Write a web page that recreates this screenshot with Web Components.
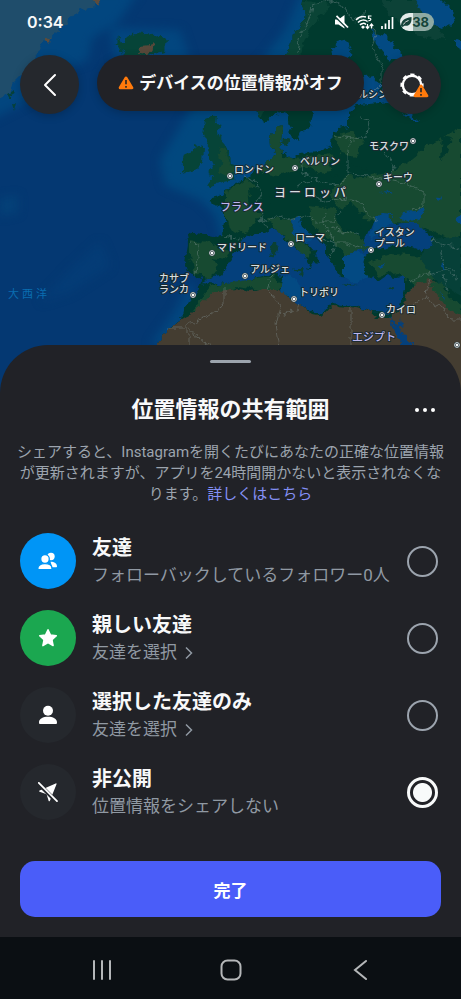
<!DOCTYPE html>
<html lang="ja">
<head>
<meta charset="utf-8">
<meta name="viewport" content="width=device-width, initial-scale=1">
<title>位置情報の共有範囲</title>
<style>
html, body { margin: 0; background: #0b0f13; }
body { font-family: Roboto, "Noto Sans CJK JP", sans-serif; color: #f8f9fa; }
</style>
</head>
<body>
<location-screen>
  <world-map slot="map"></world-map>
  <status-bar slot="top" time="0:34" battery="38"></status-bar>
  <map-header slot="top">デバイスの位置情報がオフ</map-header>
  <bottom-sheet slot="sheet" heading="位置情報の共有範囲">
    <span slot="intro">シェアすると、Instagramを開くたびにあなたの正確な位置情報が更新されますが、アプリを24時間開かないと表示されなくなります。</span>
    <share-option name="友達" color="#0095f6">
      <svg slot="icon" width="20" height="20" viewBox="0 0 20 20" fill="#fff"><circle cx="13" cy="5.500" r="3.700"/><path d="M12.500 10.700c4 0 6.500 2 6.500 4.800 0 .4-.3.700-.7.700h-4z"/><g stroke="#0095f6" stroke-width="1.300"><circle cx="7" cy="8" r="4.300"/><path d="M7 12.600c4 0 7 1.800 7 4.800 0 .8-.4 1.200-1 1.200H1c-.7 0-1.200-.4-1.200-1.200 0-3 3-4.800 6.800-4.800z"/></g></svg>
      フォローバックしているフォロワー0人
    </share-option>
    <share-option name="親しい友達" color="#1ba750" pick>
      <svg slot="icon" width="20" height="20" viewBox="0 0 20 20" fill="#fff" stroke="#fff" stroke-width="1.500" stroke-linejoin="round"><path d="M10 1.800l2.500 5.300 5.800.7-4.300 4 1.100 5.800-5.100-2.900-5.100 2.900L6 11.800l-4.300-4 5.800-.7z"/></svg>
      友達を選択
    </share-option>
    <share-option name="選択した友達のみ" color="#25282d" pick>
      <svg slot="icon" width="20" height="20" viewBox="0 0 20 20" fill="#fff"><circle cx="10" cy="5.700" r="5"/><path d="M10 11.800c5 0 9 2 9 5.600 0 1-.5 1.600-1.300 1.600H2.300C1.500 19 1 18.400 1 17.400c0-3.600 4-5.600 9-5.600z"/></svg>
      友達を選択
    </share-option>
    <share-option name="非公開" color="#25282d" checked>
      <svg slot="icon" width="20" height="20" viewBox="0 0 20 20"><path d="M17.700 1.400c.5-.2 1 .2.800.8l-6.600 16.600c-.3.700-1.100.7-1.300 0l-2-6.600-7-2.400c-.6-.2-.6-1 0-1.200z" fill="#fff"/><path d="M.8 1.900l17.500 17.500" stroke="#25282d" stroke-width="4"/><path d="M.8.900l18.200 18.200" stroke="#fff" stroke-width="1.800" stroke-linecap="round"/></svg>
      位置情報をシェアしない
    </share-option>
    <primary-button slot="action">完了</primary-button>
  </bottom-sheet>
  <system-nav slot="nav"></system-nav>
</location-screen>

<script>
const define = (tag, html, setup) => customElements.define(tag, class extends HTMLElement {
  constructor() {
    super();
    const t = document.createElement('template');
    t.innerHTML = html;
    this.attachShadow({ mode: 'open' }).append(t.content.cloneNode(true));
  }
  connectedCallback() { if (setup) setup(this, this.shadowRoot); }
});

define('location-screen', `
<style>
  :host { display: flex; flex-direction: column; min-height: 100vh; position: relative; isolation: isolate; background: #043872; }
  .map { position: absolute; inset: 0; z-index: -1; overflow: hidden; }
  .top { flex: 1; min-height: 160px; }
</style>
<div class="map"><slot name="map"></slot></div>
<div class="top"><slot name="top"></slot></div>
<slot name="sheet"></slot>
<slot name="nav"></slot>`);

define('world-map', `
<style>
  :host { display: block; }
  svg { display: block; width: 100%; height: auto; }
  filter { color-interpolation-filters: sRGB; }
  text { font-family: "Noto Sans CJK JP", sans-serif; font-weight: 500; font-size: 10px; fill: #d8dfe0; stroke: #1b2b30; stroke-width: 2px; stroke-linejoin: round; paint-order: stroke; }
  .country { fill: #bdb5ee; font-size: 11px; }
  .region { font-size: 12px; letter-spacing: 3px; }
  .sea { fill: #0a6db0; stroke: none; font-size: 11px; font-weight: 400; letter-spacing: 3px; }
</style>
<svg viewBox="0 0 461 420" role="img" aria-label="地図">
  <defs>
    <filter id="rough" x="0" y="0" width="100%" height="100%" filterUnits="userSpaceOnUse">
      <feTurbulence type="fractalNoise" baseFrequency=".13" numOctaves="3" seed="7"/>
      <feDisplacementMap in="SourceGraphic" scale="9" xChannelSelector="R" yChannelSelector="G"/>
    </filter>
    <filter id="soft"><feGaussianBlur stdDeviation="5"/></filter>
    <clipPath id="land"><use href="#continent"/></clipPath>
    <g id="pin"><circle r="3.200" fill="#27363c"/><circle r="2.400" fill="none" stroke="#cfd8da"/><circle r="1.300" fill="#fff"/></g>
  </defs>
  <rect width="461" height="420" fill="#043872"/>
  <g filter="url(#soft)">
    <path d="M-10-10H140L118 22 92 38 88 60 60 70 30 100 0 115-10 120z" fill="#02467f"/>
    <path d="M110 28L180 30 190 60 150 75 115 60z" fill="#02467f"/>
    <path d="M300-5L285 30 262 60 240 80 205 85 190 110 178 130 160 160 165 185 200 200 215 215 222 240 240 240 300 200 470 120V-5z" fill="#01487f"/>
    <path d="M0 198L18 196 18 212 0 216z" fill="#044178"/>
    <path d="M70 270l30-28 10 24-40 26-30 10z" fill="#043c76"/>
    <path d="M190 280L175 310 150 345H170L200 310z" fill="#02467f"/>
  </g>
  <g filter="url(#rough)">
    <path d="M-9-9H98L93 8 74 14 62 28 48 40 38 50 33 62 22 74 12 84 9 94-9 98z" fill="#1f4d6b"/>
    <path d="M90-5h16l-8 12z" fill="#5b4c3d"/><path d="M45 40l5-4-1 8z" fill="#5b4c3d"/>
    <path d="M8 94l6-3-3 8zM12 104l4-2-2 8z" fill="#06413a"/>
    <path d="M117 38l8 4 4-7 6-2 8 1 10 1 8-2 5 8-2 10-10 3-13 4-14-2-8-5 2-5-6-3 6-1z" fill="#064438"/>
    <path d="M138 54l3-8 8-1 6-2-2 8-6 4z" fill="#57483a"/>
    <path id="continent" d="M305-9L302 5 306 12 305 20 300 27 293 37 290 47 287 55 262 90 256 108 260 119 267 121 273 116 285 111 287 118 292 137 297 142 302 130 310 128 312 114 310 105 320 90 335 60 333 47 337 42 350 40 353 50 346 60 347 80 352 92 362 95 378 88 394 94 392 102 357 105 348 113 348 128 333 131 332 146 318 151 300 153 290 157 280 151 282 132 280 125 270 135 271 146 276 155 267 162 257 167 252 173 238 181 233 187 225 192 223 195 210 198 209 202 218 205 225 212 225 220 223 235 213 236 192 232 186 237 188 245 185 263 188 273 195 274 202 280 197 292 185 307 182 320 167 330 158 345V429H470V-9z" fill="#003a2e"/>
    <g clip-path="url(#land)">
      <path d="M300 0L330 5 310 30 300 55 270 90 260 120 250 80z" fill="#0a4436"/>
      <path d="M380 0h45l20 40-30-5-25-20z" fill="#0c4237"/>
      <g fill="#174a31">
        <path d="M268 124h14v32l20 2 30-4 10 16-22 4-14-8-30 10-18-4z"/>
        <path d="M335 135l16-4 12 10-8 16-14-4z"/>
        <path d="M345 175l42-2 20-10 24-20 30-16V245l-30-14-20-8-50-2-20-8-10-20z"/>
        <path d="M225 194l22-16 12 12 6 22-20 22-16-6-4-18z"/>
        <path d="M190 240l20 4 20 6-10 20-14 10-10-8-6-16z"/>
        <path d="M268 218l22 2 10 14 12 18-6 8-20-22-14-12z"/>
        <path d="M310 205l24 4 6 18 20 12 14 4-4 10-24 4-12-14-22-18z"/>
        <path d="M368 262l24-8 36 2 20 6-18 22-12 6-20-18-20 4z"/>
        <path d="M210 286l30-6 34-4 8 10-12 6-32-6-24 10-14 24-6-12z"/>
      </g>
      <g fill="#003a2e">
        <path d="M338 208l14-5 12 12-4 14-16 2-8-10zM248 190l14-2 10 14-10 12-12-8zM330 160l20 4 24 8-8 6-34-2zM212 258l14 2-6 12zM442 135l10 2-4 16-8 6z"/>
      </g>
      <path d="M425 240l36-4v60l-24-14-16-22z" fill="#064038"/>
      <path d="M150 349L167 330 190 315 200 305 215 292 235 288 250 291 262 288 275 288 283 290 290 300 300 305 312 314 323 316 332 306 352 307 373 312 375 318 388 318 395 312 402 308 408 292 418 282 430 280 440 287 445 300 470 312V429H150z" fill="#443d31"/>
      <path d="M430 284l12-2 8 18 14 8v8l-18-8-10-14z" fill="#174a31"/>
    </g>
    <path d="M205 118l5-2 6 1-1 6 7 1-4 9 6 10 6 14 1 6 6 4-2 8 2 4-15 3-15 4 6-8-6-4 7-6-2-9-5-10 2-8-6-6z" fill="#064438"/>
    <path d="M216 145l8 4 6 14 4 6-4 8-12-4 4-12z" fill="#174a31"/>
    <path d="M194 145l9 3-1 15-7 7-13 4 3-7-3-5 3-8 5-1z" fill="#064438"/>
    <g fill="#04407c">
      <path d="M202 282L213 276 223 275 230 263 233 256 240 247 247 235 255 233 265 233 273 228 280 232 285 240 297 250 305 258 309 264 307 271 313 262 321 263 315 252 307 243 298 235 292 228 291 220 298 218 302 227 317 238 327 247 327 255 333 265 340 276 348 277 343 258 352 252 372 249 366 256 363 267 368 277 380 281 387 276 395 278 405 275 405 290 400 308 392 313 373 312 352 305 332 303 323 314 307 309 295 303 287 294 280 288 285 280 283 275 273 274 240 281 218 284z"/>
      <path d="M365 245L367 237 373 222 383 212 393 213 388 218 395 224 405 223 417 223 425 230 433 240 431 247 420 251 407 247 393 245 380 250 372 250z"/>
      <path d="M387 314l10 12 16 20 10 34h-10l-20-55zM400 318l2 10-4-1z"/>
    </g>
    <g fill="#034a83">
      <path d="M343 258l9-6 14 2-3 13 6 11-14 6-12-8zM283 276l12 2 10 20-14 2-11-12zM291 220l7-2 4 9 12 11-8 4-12-10zM373 222l10-10 10 1-5 5 6 5-12 6-12 12zM400 217l2-5 15-1 8-4-4 10-12 5z"/>
      <path d="M372 32l14 4 14 16 4 10-16-4-12-14zM412-4h26l14 14 2 14-12 4-14-6zM455 40l12 2v10l-12-4zM360 78l14-2 8 10-10 8-12-2zM404 112l8 2 6 6-6 0zM456 218l6-4v16zM380 190l14 4-3 1z"/>
      <path d="M436 198l5-4-3 8zM441 266l4-2-2 8zM440 291l3 4 1 6zM379 265l6-3-2 5z"/>
    </g>
    <path d="M273 241l4 0 1 8-5 10-2-8zM292 269h13l-2 7zM343 284l14 2-10 1zM388 287l8-2-3 4zM283 138l6 2-3 7-4-4z" fill="#0a4034"/>
  </g>
  <g fill="none" stroke="#8a9a9c" stroke-width="1" opacity=".38" filter="url(#rough)">
    <path d="M297 54l3-20 8-12 4-16 20-6M332 0l14 8 8 14 14-12M366 20l10 14-4 14 10 20 0 16-14 14"/>
    <path d="M335 136l18 2 14-2 2-16-10-2M352 140l-4 14 0 20 22 2 18 4 6-14-14-20-12-4M388 180l20 4 16 8 0 14-10 4M302 156l2 18 14 6 18 6 12-10M244 176l12 4 6 14-4 8 6 12-4 8 20-6 10 4 14-4 14 6 14 0 8-12M296 186l16-6M312 196l14 6 16-4 18 4 8 14 10 6M326 212l-4 14 10 8 2 10-14-6M334 228l24 8M334 244l14 0 14 4M334 246l-4 12M260 218l6 10M223 235l20 6M190 243l8 1-2 30M432 240l12 4 16 4M440 250l4 14 10 8M408 282l12-6 24-6 14 8M444 276l4 16M430 280l-6 18-16 12M424 298l20 10 6 12 14 0M224 286l0 18-18 14-18 6v30M189 330l24 18M166 328h22M272 276l-4 12 12 20-4 16 4 24M300 305l-16 10M351 306v44"/>
  </g>
  <use href="#pin" x="230" y="176"/><use href="#pin" x="295" y="168"/><use href="#pin" x="413" y="141"/><use href="#pin" x="379" y="184"/><use href="#pin" x="212" y="253"/><use href="#pin" x="291" y="244"/><use href="#pin" x="371" y="250"/><use href="#pin" x="245" y="276"/><use href="#pin" x="193" y="295"/><use href="#pin" x="294" y="299"/><use href="#pin" x="382" y="315"/><use href="#pin" x="457" y="345"/>
  <text x="234" y="173">ロンドン</text>
  <text x="300" y="165">ベルリン</text>
  <text x="369" y="150">モスクワ</text>
  <text x="383" y="181">キーウ</text>
  <text x="348" y="98">ヘルシンキ</text>
  <text x="274" y="197" class="region">ヨーロッパ</text>
  <text x="220" y="211" class="country">フランス</text>
  <text x="217" y="251">マドリード</text>
  <text x="295" y="241">ローマ</text>
  <text x="375" y="236">イスタン</text>
  <text x="375" y="247">プール</text>
  <text x="250" y="273">アルジェ</text>
  <text x="159" y="282">カサブ</text>
  <text x="159" y="293">ランカ</text>
  <text x="299" y="296">トリポリ</text>
  <text x="386" y="313">カイロ</text>
  <text x="352" y="341" class="country">エジプト</text>
  <text x="8" y="298" class="sea">大西洋</text>
</svg>`);

define('status-bar', `
<style>
  :host { display: flex; align-items: center; justify-content: space-between; height: 44px; padding: 0 27px; }
  time { font: 600 16px/20px Inter, sans-serif; }
  .icons { display: flex; align-items: center; gap: 6px; }
  svg { display: block; }
  .battery { display: flex; align-items: center; justify-content: flex-end; width: 29px; height: 18px; padding-right: 5px; border-radius: 9px; background: linear-gradient(90deg, #e4ecea 38%, #8eaaa3 38%); color: #15443a; font: 700 13px/18px Inter, sans-serif; }
</style>
<time></time>
<div class="icons">
  <svg width="14" height="14" viewBox="0 0 14 14"><path d="M0 4.500h3.500L9.500 0v13.500L3.500 9.500H0z" fill="#fff"/><path d="M1 2.500l11.500 11.500" stroke="#0b3b35" stroke-width="1.500"/><path d="M1.500.8L13 12.500" stroke="#fff" stroke-width="1.700"/></svg>
  <svg width="20" height="15" viewBox="0 0 20 15" fill="none" stroke="#fff" stroke-width="1.500"><path d="M1 5a10 10 0 0 1 10-3M3 7.500a7 7 0 0 1 9.500-1M5 10a4 4 0 0 1 6-.5"/><path d="M8 10.500l2 1.500-2 2-2-2z" fill="#fff" stroke="none"/><path d="M16.500 1h-3v2.300c3-.6 3.200 2.700 0 2.400M12.500 9v4.500m-1.700-2l1.700 2 1.700-2M16.500 13.500V9m-1.700 2l1.700-2 1.700 2" stroke-width="1.200"/></svg>
  <svg width="13" height="13" viewBox="0 0 13 13" stroke="#fff" stroke-width="1.700"><path d="M1 13v-3M4.500 13V7.500M8 13V4M11.500 13V1"/></svg>
  <div class="battery"><svg width="11" height="10" viewBox="0 0 11 10"><path d="M0 9C0 4 3 1 10.500 0 11 6 8.500 9.500 3.500 8.700L1.500 10z" fill="#15443a"/><path d="M2.500 7.500c1-2 2.500-3 5-4" stroke="#e4ecea"/></svg><span></span></div>
</div>`, (el, root) => {
  root.querySelector('time').textContent = el.getAttribute('time');
  root.querySelector('.battery span').textContent = el.getAttribute('battery');
});

const warning = '<svg class="warn" width="16" height="14" viewBox="0 0 16 14"><path d="M8 2l5.800 9.800H2.200z" fill="#ff7a0c" stroke="#ff7a0c" stroke-width="3" stroke-linejoin="round"/><path d="M8 4v4.300M8 10v1.700" stroke="#252525" stroke-width="1.600"/></svg>';
define('map-header', `
<style>
  :host { display: flex; align-items: flex-start; justify-content: space-between; padding: 11px 20px 0; }
  button { display: flex; align-items: center; justify-content: center; border: 0; padding: 0; margin: 0; font: inherit; color: inherit; background: #25282d; box-shadow: 0 2px 8px #0003; }
  .round { width: 59px; height: 59px; border-radius: 50%; }
  .pill { height: 56px; padding: 0 21px; border-radius: 28px; gap: 5px; font-size: 17px; font-weight: 700; line-height: 24px; background: #212227; }
  .gear { position: relative; display: grid; }
  .gear .warn { position: absolute; right: -5px; bottom: -1px; }
</style>
<button class="round" aria-label="戻る"><svg width="14" height="24" viewBox="0 0 14 24" fill="none" stroke="#fff" stroke-width="2" stroke-linecap="round" stroke-linejoin="round"><path d="M12 2L2 12l10 10"/></svg></button>
<button class="pill">${warning}<span><slot></slot></span></button>
<button class="round" aria-label="設定"><span class="gear"><svg width="24" height="24" viewBox="0 0 24 24" fill="none" stroke="#fff"><circle cx="12" cy="12" r="9.200" stroke-width="2.400"/><circle cx="12" cy="12" r="10.400" stroke-width="2.400" stroke-dasharray="4.170 4" stroke-dashoffset="2"/></svg>${warning}</span></button>`);

define('bottom-sheet', `
<style>
  :host { display: block; background: #212227; border-radius: 48px 48px 0 0; padding: 15px 20px 20px; }
  .handle { width: 41px; height: 3px; border-radius: 2px; background: #9ca4ad; margin: 0 auto; }
  header { display: grid; grid-template-columns: 32px 1fr 32px; align-items: center; margin-top: 31px; }
  h1 { grid-column: 2; margin: 0; text-align: center; font-size: 22px; line-height: 32px; font-weight: 700; }
  .more { width: 32px; height: 32px; display: grid; place-items: center; border: 0; padding: 0; background: none; }
  p { margin: 16px -4px 0; text-align: center; font-size: 15px; line-height: 21px; color: #9ca4ae; }
  a { color: #8490f5; text-decoration: none; }
  .options { display: grid; gap: 21px; margin: 28px 0 41px; }
</style>
<div class="handle"></div>
<header><h1></h1><button class="more" aria-label="その他"><svg width="20" height="6" viewBox="0 0 20 6" fill="#fff"><circle cx="2" cy="3" r="2"/><circle cx="10" cy="3" r="2"/><circle cx="18" cy="3" r="2"/></svg></button></header>
<p><slot name="intro"></slot><a href="#details">詳しくはこちら</a></p>
<div class="options" role="radiogroup"><slot></slot></div>
<slot name="action"></slot>`, (el, root) => {
  root.querySelector('h1').textContent = el.getAttribute('heading');
  el.addEventListener('option-picked', e => {
    for (const o of el.querySelectorAll('share-option'))
      if (o !== e.target) o.shadowRoot.querySelector('input').checked = false;
  });
});

define('share-option', `
<style>
  :host { display: flex; align-items: center; gap: 16px; }
  .disc { flex: none; width: 56px; height: 56px; border-radius: 50%; display: grid; place-items: center; }
  .text { flex: 1; min-width: 0; padding-top: 2px; white-space: nowrap; }
  label { display: block; font-size: 20px; line-height: 27px; font-weight: 700; }
  .sub { display: flex; align-items: center; gap: 8px; border: 0; padding: 0; background: none; font: inherit; font-size: 17px; line-height: 27px; color: #9099a3; }
  .sub svg { display: block; }
  input { appearance: none; flex: none; box-sizing: border-box; width: 31px; height: 31px; margin: 0 3px 0 0; border: 2px solid #9ca4ae; border-radius: 50%; }
  input:checked { border: 3px solid #f8fafa; background: radial-gradient(circle, #f8fafa 9px, transparent 10px); }
</style>
<div class="disc"><slot name="icon"></slot></div>
<div class="text"><label for="choice"></label></div>
<input type="radio" id="choice">`, (el, root) => {
  root.querySelector('label').textContent = el.getAttribute('name');
  root.querySelector('.disc').style.background = el.getAttribute('color');
  const pick = el.hasAttribute('pick');
  const sub = document.createElement(pick ? 'button' : 'div');
  sub.className = 'sub';
  sub.innerHTML = '<span><slot></slot></span>' + (pick ? '<svg width="8" height="14" viewBox="0 0 8 14" fill="none" stroke="#9099a3" stroke-width="1.500"><path d="M1 1.500L6.500 7 1 12.500"/></svg>' : '');
  root.querySelector('.text').append(sub);
  const input = root.querySelector('input');
  input.checked = el.hasAttribute('checked');
  input.addEventListener('change', () => el.dispatchEvent(new CustomEvent('option-picked', { bubbles: true })));
});

define('primary-button', `
<style>
  :host { display: block; }
  button { display: block; width: 100%; height: 56px; border: 0; border-radius: 15px; background: #4a5df9; color: #fff; font: inherit; font-size: 17px; font-weight: 700; }
</style>
<button><slot></slot></button>`);

define('system-nav', `
<style>
  :host { display: grid; grid-template-columns: 1fr 1fr 1fr; height: 62px; padding: 3px 37px 0; box-sizing: border-box; background: #0b0f13; }
  button { display: grid; place-items: center; border: 0; padding: 0; background: none; }
  svg { fill: none; stroke: #b5b7b9; stroke-width: 2; stroke-linecap: round; }
</style>
<button aria-label="最近使ったアプリ"><svg width="20" height="22" viewBox="0 0 20 22"><path d="M2 2v18M10 2v18M18 2v18"/></svg></button>
<button aria-label="ホーム"><svg width="22" height="22" viewBox="0 0 22 22"><rect x="1.500" y="1.500" width="19" height="19" rx="6"/></svg></button>
<button aria-label="戻る"><svg width="14" height="22" viewBox="0 0 14 22"><path d="M13 2L2 11l11 9"/></svg></button>`);
</script>
</body>
</html>
